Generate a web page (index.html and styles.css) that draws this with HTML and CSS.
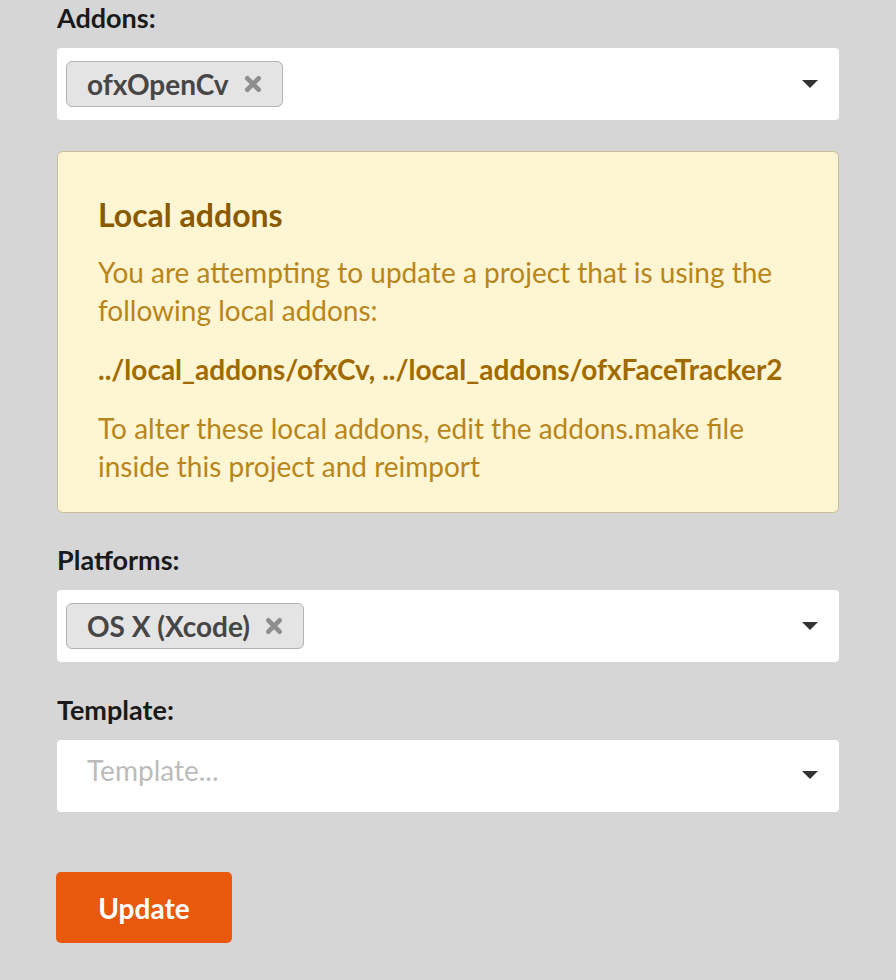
FILE: index.html
```html
<!DOCTYPE html>
<html>
<head>
<meta charset="utf-8">
<link rel="stylesheet" href="styles.css">
</head>
<body>
<main class="form">
  <div class="field">
    <label class="label">Addons:</label>
    <div class="select">
      <div class="tags">
        <span class="tag">ofxOpenCv<svg class="x" viewBox="0 0 16 16"><path d="M3 3L13 13M13 3L3 13"/></svg></span>
      </div>
      <span class="arrow"></span>
    </div>
  </div>

  <div class="alert">
    <h4 class="alert-title">Local addons</h4>
    <p class="alert-text">You are attempting to update a project that is using the following local addons:</p>
    <p class="alert-text alert-strong">../local_addons/ofxCv, ../local_addons/ofxFaceTracker2</p>
    <p class="alert-text">To alter these local addons, edit the addons.make file inside this project and reimport</p>
  </div>

  <div class="field">
    <label class="label">Platforms:</label>
    <div class="select">
      <div class="tags">
        <span class="tag">OS X (Xcode)<svg class="x" viewBox="0 0 16 16"><path d="M3 3L13 13M13 3L3 13"/></svg></span>
      </div>
      <span class="arrow"></span>
    </div>
  </div>

  <div class="field">
    <label class="label">Template:</label>
    <div class="select select-empty">
      <span class="placeholder">Template...</span>
      <span class="arrow"></span>
    </div>
  </div>

  <button class="btn">Update</button>
</main>
</body>
</html>
```

FILE: styles.css
```css
* { box-sizing: border-box; }
html, body { margin: 0; padding: 0; }
body {
  background: #d6d6d6;
  font-family: Lato, "Open Sans", sans-serif;
  color: #1a1a1a;
}
.form {
  width: 782px;
  margin-left: 57px;
  padding-top: 1px;
}
.field { margin-bottom: 31px; }
.label {
  display: block;
  font-size: 27px;
  font-weight: 700;
  line-height: 33px;
  margin-bottom: 14px;
  color: #1a1a1a;
}
.select {
  height: 72px;
  background: #fff;
  border-radius: 4px;
  display: flex;
  align-items: center;
  padding: 0 21px 0 9px;
}
.tags { flex: 1; display: flex; }
.tag {
  display: inline-flex;
  align-items: center;
  height: 46px;
  padding: 0 20px 0 20px;
  background: #e4e4e4;
  border: 1px solid #b3b3b3;
  border-radius: 6px;
  font-size: 28px;
  font-weight: 700;
  color: #464646;
}
.x {
  width: 18px;
  height: 18px;
  margin-left: 15px;
  fill: none;
  stroke: #8e8e8e;
  stroke-width: 4.2;
  stroke-linecap: round;
}
.arrow {
  width: 0;
  height: 0;
  border-left: 8.5px solid transparent;
  border-right: 8.5px solid transparent;
  border-top: 8.5px solid #333;
}
.select-empty {
  align-items: flex-start;
  padding-left: 30px;
}
.placeholder {
  flex: 1;
  font-size: 28px;
  line-height: 34px;
  padding-top: 13px;
  color: #bcbcbc;
}
.select-empty .arrow { margin-top: 31px; }
.alert {
  background: #fef5d2;
  border: 1px solid #c7bd98;
  border-radius: 6px;
  padding: 44px 40px 27px 40px;
  margin-bottom: 30px;
}
.alert-title {
  margin: 0 0 20px 0;
  font-size: 32px;
  line-height: 37px;
  font-weight: 700;
  color: #8a5a00;
}
.alert-text {
  margin: 0 0 21px 0;
  font-size: 28px;
  line-height: 38px;
  color: #b8861c;
}
.alert-text:last-child { margin-bottom: 0; }
.alert-strong {
  font-weight: 700;
  color: #a06a00;
}
.btn {
  display: block;
  margin-top: 60px;
  width: 176px;
  height: 71px;
  margin-left: -1px;
  background: #e8590e;
  border: none;
  border-radius: 5px;
  color: #fff;
  font-family: Lato, sans-serif;
  font-size: 28px;
  font-weight: 700;
}
```
